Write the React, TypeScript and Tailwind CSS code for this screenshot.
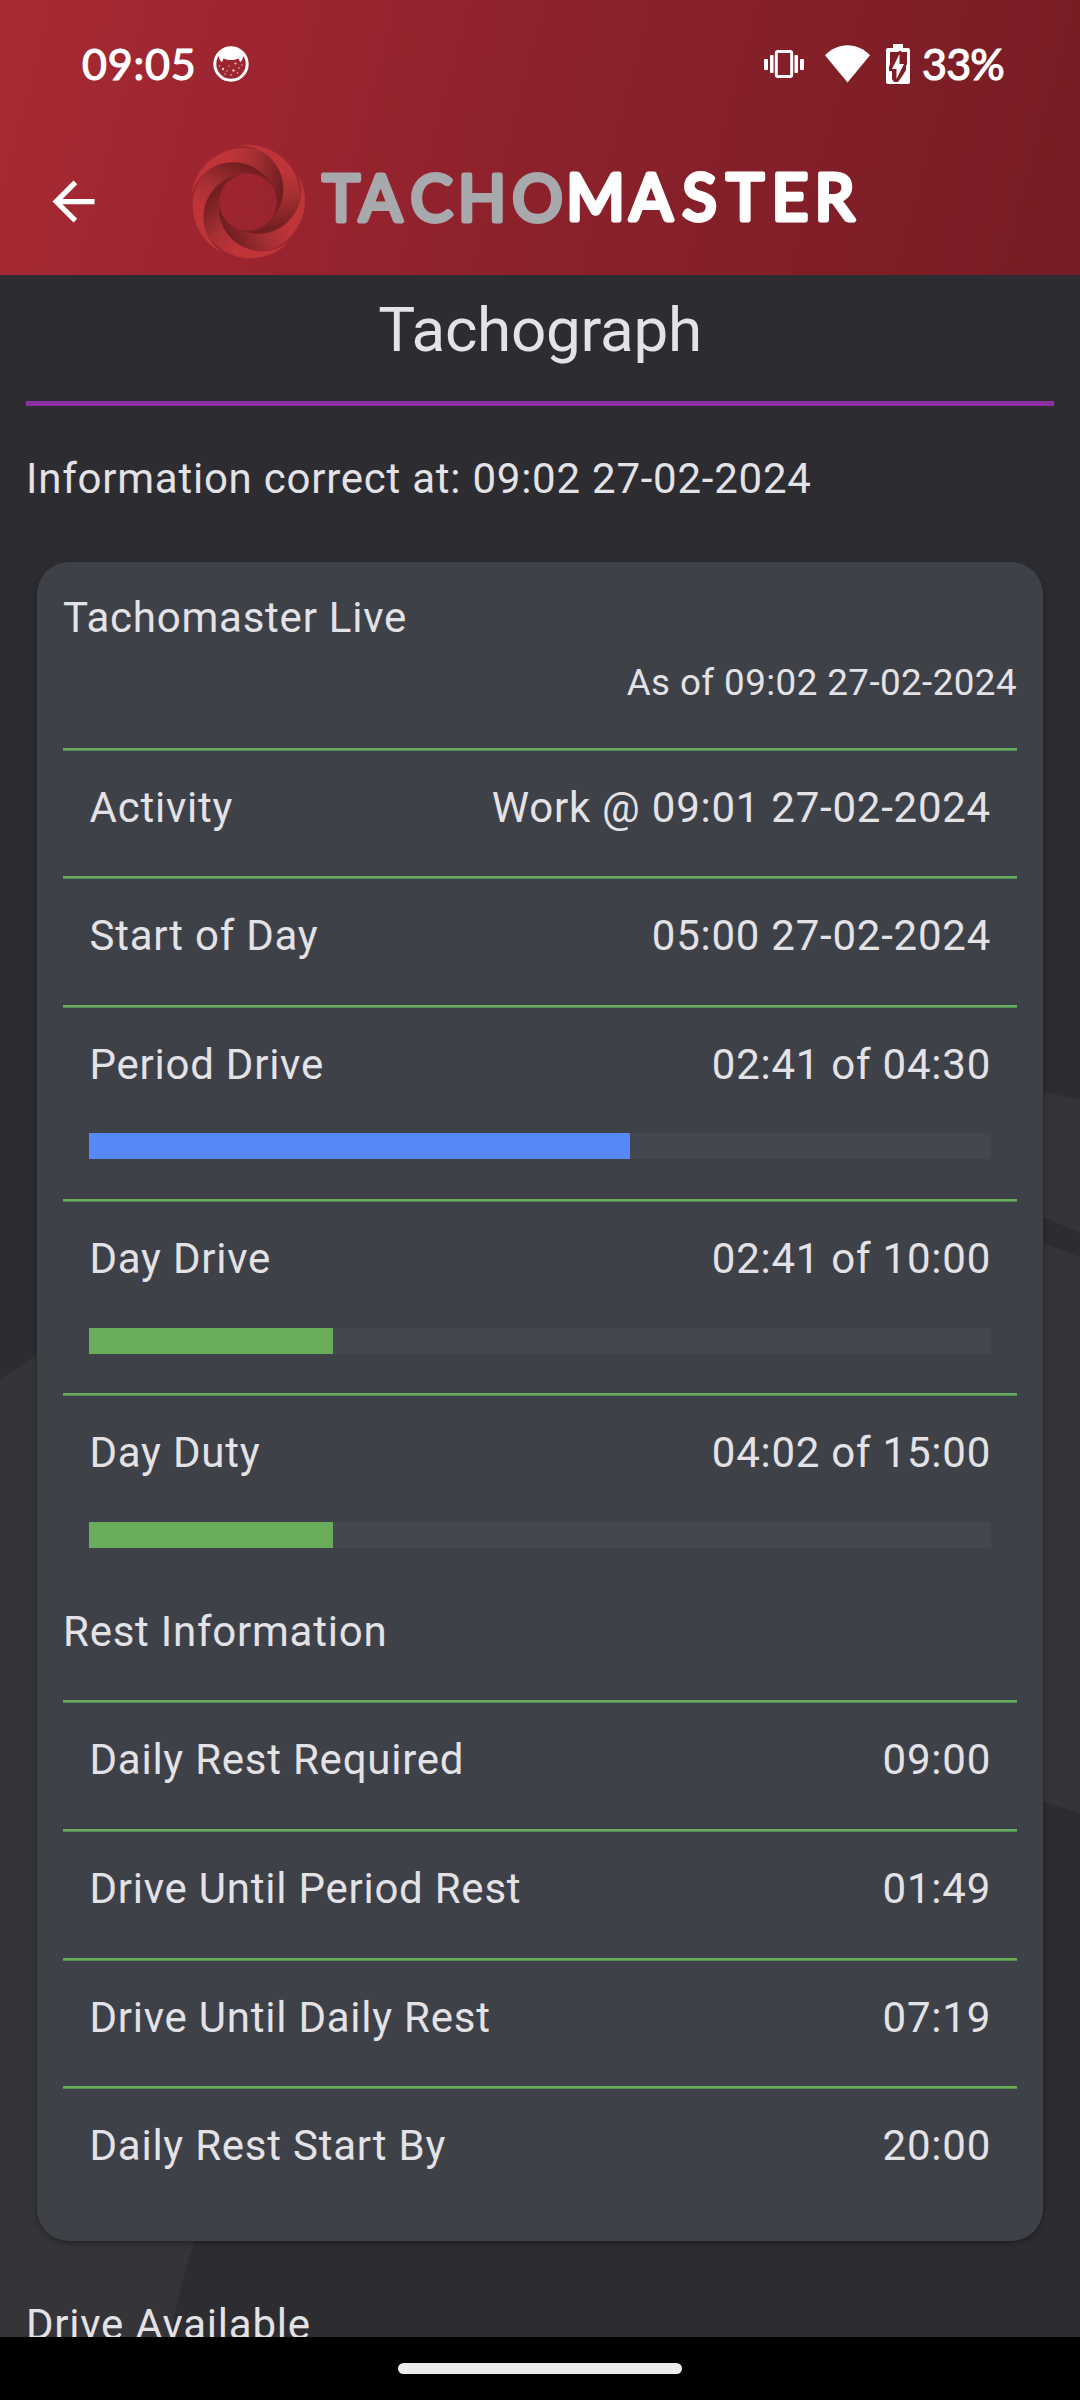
interface RowProps {
  label: string
  value: string
  progress?: number
  color?: string
}

const LIVE_ROWS: RowProps[] = [
  { label: 'Activity', value: 'Work @ 09:01 27-02-2024' },
  { label: 'Start of Day', value: '05:00 27-02-2024' },
  { label: 'Period Drive', value: '02:41 of 04:30', progress: 60, color: 'bg-[#5689f7]' },
  { label: 'Day Drive', value: '02:41 of 10:00', progress: 27, color: 'bg-[#68ac5c]' },
  { label: 'Day Duty', value: '04:02 of 15:00', progress: 27, color: 'bg-[#68ac5c]' },
]

const REST_ROWS: RowProps[] = [
  { label: 'Daily Rest Required', value: '09:00' },
  { label: 'Drive Until Period Rest', value: '01:49' },
  { label: 'Drive Until Daily Rest', value: '07:19' },
  { label: 'Daily Rest Start By', value: '20:00' },
]

const BLADES = [0, 72, 144, 216, 288]

function Row({ label, value, progress, color }: RowProps) {
  return (
    <div className={progress ? 'h-[194.25px]' : 'h-[128.625px]'}>
      <div className="h-[3px] bg-[#68ac5c] border-b border-[#538a52]" />
      <div className="flex justify-between pl-[26.5px] pr-[26px] pt-[31px] leading-[52px]">
        <span>{label}</span>
        <span>{value}</span>
      </div>
      {progress && (
        <div className="mx-[26px] mt-[42.6px] h-[26px] bg-[#44474f]">
          <div className={`h-full ${color}`} style={{ width: `${progress}%` }} />
        </div>
      )}
    </div>
  )
}

function StatusBar() {
  return (
    <div className="flex h-[128px] items-center pl-[82px] pr-[73px] text-white font-['Lato',sans-serif] text-[43px] tracking-[0px] [-webkit-text-stroke:1.2px_white]">
      <span className="w-[131px] tracking-[0.8px]">09:05</span>
      <svg className="w-9 h-9" viewBox="0 0 36 36">
        <circle cx="18" cy="18" r="16.2" fill="none" stroke="white" strokeWidth="3" />
        <path d="M5.5 10Q9 2 18 2T30.5 10Q30 13 28 15.5L27 16L25.5 12.5Q18 15.5 10.5 12.5L9 16L8 15.5Q6 13 5.5 10Z" fill="white" />
        <g fill="white" opacity=".75">
          <circle cx="22.5" cy="17.5" r="1.1" />
          <circle cx="10" cy="23" r="1.2" />
          <circle cx="20.5" cy="24.5" r="1.2" />
          <circle cx="16" cy="20" r=".7" />
          <circle cx="14" cy="25" r=".7" />
          <circle cx="26" cy="22" r=".8" />
          <circle cx="18" cy="29" r=".8" />
          <circle cx="6.5" cy="20" r=".7" />
          <circle cx="29" cy="19" r=".7" />
          <circle cx="12" cy="28" r=".7" />
          <circle cx="24.5" cy="27" r=".7" />
        </g>
      </svg>

      {/* vibrate */}
      <svg className="ml-auto w-10 h-7" viewBox="0 0 40 28" fill="white">
        <rect x="0" y="9" width="4" height="11" rx=".8" />
        <rect x="6" y="5" width="3.5" height="18" rx=".8" />
        <rect x="12.3" y="1.5" width="15.4" height="25" rx="1.5" fill="none" stroke="white" strokeWidth="3" />
        <rect x="30.5" y="5" width="3.5" height="18" rx=".8" />
        <rect x="36" y="9" width="4" height="11" rx=".8" />
      </svg>

      {/* wifi */}
      <svg className="ml-[21px] w-[45px] h-[38px]" viewBox="0 0 45 38" fill="white">
        <path d="M0 10.3C6 4 14 .3 22.5 .3S39 4 45 10.3L22.5 37.6Z" />
      </svg>

      {/* battery, charging */}
      <svg className="ml-4 w-6 h-10" viewBox="0 0 24 40">
        <path
          fill="white"
          fillRule="evenodd"
          d="M7 0H17V4H22Q24 4 24 6V38Q24 40 22 40H2Q0 40 0 38V6Q0 4 2 4H7ZM4 8V20L3 23V27H6V35L8 38H12L17 31L20 26V22L21 20V8H16L14 6.5L12 8Z"
        />
        <path fill="white" d="M13.5 10V20H18L10.5 35V25H6Z" />
      </svg>
      <span className="ml-3 w-[85px] whitespace-nowrap tracking-[-0.8px]">33%</span>
    </div>
  )
}

function Logo() {
  return (
    <svg className="w-[680px] h-[120px]" viewBox="0 0 680 120">
      <defs>
        <linearGradient id="blade" gradientUnits="userSpaceOnUse" x1="-24" y1="-4" x2="30" y2="4">
          <stop offset="0" stopColor="#bf3437" />
          <stop offset=".45" stopColor="#a53033" />
          <stop offset="1" stopColor="#731e21" />
        </linearGradient>
      </defs>
      <g transform="translate(58 60) scale(1.01)">
        {BLADES.map((angle) => (
          <path
            key={angle}
            transform={`rotate(${angle})`}
            fill="url(#blade)"
            d="M-56-7.5A52 52 0 0 1 8.8-51.7A43 43 0 0 1 16.8 22.8A28.3 28.3 0 0 0 26.9-8.9A43 43 0 0 0-56-7.5Z"
          />
        ))}
      </g>
      {/* Wordmark, each letter centred on its own x */}
      <g className="font-['Lato',sans-serif] text-[63px] tracking-[0px]" textAnchor="middle" strokeWidth="4.8" strokeLinejoin="round">
        <text x="151 190.5 241.5 292 347.5" y="79" fill="#a7a9ac" stroke="#a7a9ac">TACHO</text>
        <text x="405.5 461 509.5 555 600 644.5" y="78" fill="white" stroke="white">MASTER</text>
      </g>
    </svg>
  )
}

export default function App() {
  return (
    <div className="relative flex flex-col w-[1080px] h-[2400px] overflow-hidden bg-[#2d2c31] text-[#e3e2e6] font-['Roboto',sans-serif] text-[42px] tracking-[0.76px]">
      {/* Background swirl */}
      <svg className="absolute inset-0 w-full h-full" viewBox="0 0 1080 2400" fill="#353438">
        <path d="M0 1379L36 1356L400 1300V1700L194 2241Q176 2300 170 2340H0Z" />
        <path d="M1000 1088L1043 1092L1080 1099V1233L1043 1217L1000 1200Z" />
        <path d="M1000 1230L1043 1243L1080 1257V1813L1043 1802L1000 1790Z" />
      </svg>

      <header className="relative h-[275px] bg-[linear-gradient(105deg,#a72a33,#9a2430_28%,#8b212b_52%,#761c24)]">
        <StatusBar />
        <div className="flex items-center h-[147px] pl-[42px]">
          <svg className="w-[63px] h-[63px]" viewBox="0 0 24 24" fill="white">
            <path d="M20 11H7.83l5.59-5.59L12 4l-8 8 8 8 1.41-1.41L7.83 13H20v-2z" />
          </svg>
          <div className="ml-[85px]">
            <Logo />
          </div>
        </div>
      </header>

      <main className="relative h-[2062px] overflow-hidden">
        <h1 className="h-[126px] pt-[18px] text-center text-[62px] leading-[74px] tracking-[-0.3px]">Tachograph</h1>
        <div className="mx-[26px] h-[5px] bg-[#8f2fa5]" />
        <p className="px-[26px] pt-[46.6px] leading-[52px]">Information correct at: 09:02 27-02-2024</p>

        <section className="mx-[37px] mt-[57.4px] h-[1679px] rounded-[32px] bg-[#3f4149] px-[26px] shadow-[0_2px_5px_rgba(0,0,0,0.35)]">
          <h2 className="h-[89px] pt-[30.1px] leading-[52px]">Tachomaster Live</h2>
          <p className="h-[96.6px] pt-[9.1px] text-right text-[36.75px] leading-[46px] tracking-[0.42px]">
            As of 09:02 27-02-2024
          </p>
          {LIVE_ROWS.map((row) => (
            <Row key={row.label} {...row} />
          ))}
          <h2 className="h-[112.8px] pt-[18px] leading-[52px]">Rest Information</h2>
          {REST_ROWS.map((row) => (
            <Row key={row.label} {...row} />
          ))}
        </section>

        <p className="px-[26px] pt-[58.1px] leading-[52px]">Drive Available</p>
      </main>

      {/* Gesture bar */}
      <div className="relative flex h-[63px] justify-center bg-black pt-[26px]">
        <div className="h-[11px] w-[284px] rounded-full bg-[#ebebeb]" />
      </div>
    </div>
  )
}
